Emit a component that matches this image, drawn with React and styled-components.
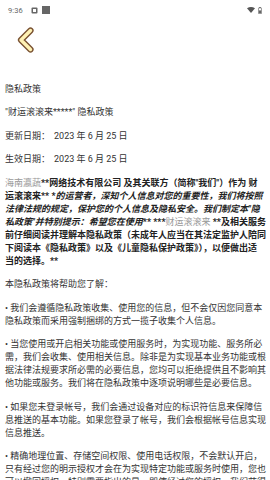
import React from "react";
import styled, { createGlobalStyle } from "styled-components";

const GlobalStyle = createGlobalStyle`
  html, body { margin: 0; padding: 0; background: #ffffff; }
  body { font-family: Roboto, "Noto Sans CJK SC", sans-serif; }
`;

const Page = styled.div`
  width: 270px;
  height: 480px;
  overflow: hidden;
  background: #fff;
`;

const StatusBar = styled.div`
  height: 20px;
  display: flex;
  align-items: center;
  justify-content: space-between;
  padding: 0 8px 0 8px;
  box-sizing: border-box;
  color: #666;
  font-size: 7.5px;
`;

const StatusGroup = styled.div`
  display: flex;
  align-items: center;
  gap: ${(p) => p.$gap || 4}px;
`;

const Time = styled.span`
  margin-right: 4px;
  letter-spacing: 0.1px;
`;

const NavBar = styled.div`
  height: 62.5px;
  box-sizing: border-box;
  padding: 7px 0 0 16px;
`;

const BackButton = styled.button`
  border: 0;
  background: none;
  padding: 0;
  width: 20px;
  height: 26px;
  display: block;
  cursor: pointer;
`;

const Content = styled.div`
  padding: 0 3px 0 5px;
  font-family: Roboto, "Noto Sans CJK SC", sans-serif;
  font-size: 9px;
  line-height: 13px;
  color: #333;
`;

const P = styled.p`
  margin: 0 0 10.5px;
  font-weight: ${(p) => (p.$bold ? 700 : 400)};
  color: ${(p) => (p.$bold ? "#222" : "#333")};
  white-space: ${(p) => (p.$bold ? "nowrap" : "normal")};
`;

const Muted = styled.span`
  color: #999;
  font-weight: 400;
`;

const Em = styled.em`
  font-style: italic;
`;

const Spaced = styled.span`
  margin-left: 4px;
`;

function Chevron() {
  return (
    <svg width="20" height="26" viewBox="0 0 20 26">
      <path
        d="M14.5 3.5 L5 13 L14.5 22.5"
        fill="none"
        stroke="#7a5232"
        strokeWidth="6.2"
        strokeLinecap="round"
        strokeLinejoin="round"
      />
      <path
        d="M14.5 3.5 L5 13 L14.5 22.5"
        fill="none"
        stroke="#fff2b4"
        strokeWidth="3.4"
        strokeLinecap="round"
        strokeLinejoin="round"
      />
    </svg>
  );
}

function NotifIcon() {
  return (
    <svg width="7" height="7" viewBox="0 0 7 7">
      <rect x="0.5" y="0.5" width="6" height="6" rx="1" fill="#666" />
      <rect x="2" y="2" width="3" height="3" fill="#fff" />
    </svg>
  );
}

function SquareIcon() {
  return (
    <svg width="8" height="8" viewBox="0 0 8 8">
      <rect x="0" y="0" width="8" height="8" fill="#666" />
    </svg>
  );
}

function WifiIcon() {
  return (
    <svg width="8" height="6" viewBox="0 0 8 6">
      <path d="M0 1.2 Q4 -1 8 1.2 L4 6 Z" fill="#555" />
    </svg>
  );
}

function BatteryIcon() {
  return (
    <svg width="4" height="7" viewBox="0 0 4 7">
      <rect x="1.2" y="0" width="1.6" height="1" fill="#666" />
      <rect x="0.4" y="0.9" width="3.2" height="5.8" rx="0.4" fill="none" stroke="#666" strokeWidth="0.7" />
      <rect x="0.9" y="3.4" width="2.2" height="2.8" fill="#666" />
    </svg>
  );
}

const bullets = [
  "• 我们会遵循隐私政策收集、使用您的信息，但不会仅因您同意本隐私政策而采用强制捆绑的方式一揽子收集个人信息。",
  "• 当您使用或开启相关功能或使用服务时，为实现功能、服务所必需，我们会收集、使用相关信息。除非是为实现基本业务功能或根据法律法规要求所必需的必要信息，您均可以拒绝提供且不影响其他功能或服务。我们将在隐私政策中逐项说明哪些是必要信息。",
  "• 如果您未登录帐号，我们会通过设备对应的标识符信息来保障信息推送的基本功能。如果您登录了帐号，我们会根据帐号信息实现信息推送。",
  "• 精确地理位置、存储空间权限、使用电话权限，不会默认开启，只有经过您的明示授权才会在为实现特定功能或服务时使用，您也可以撤回授权。特别需要指出的是，即使经过您的授权，我们获得了这些敏感权限，也不会在相关功能或服务不需要时而收集您的信息。",
];

export default function App() {
  return (
    <Page>
      <GlobalStyle />
      <StatusBar>
        <StatusGroup $gap={4}>
          <Time>9:36</Time>
          <NotifIcon />
          <SquareIcon />
        </StatusGroup>
        <StatusGroup $gap={3}>
          <WifiIcon />
          <BatteryIcon />
        </StatusGroup>
      </StatusBar>
      <NavBar>
        <BackButton aria-label="返回">
          <Chevron />
        </BackButton>
      </NavBar>
      <Content>
        <P>隐私政策</P>
        <P>"财运滚滚来*****" 隐私政策</P>
        <P>更新日期：<Spaced>2023 年 6 月 25 日</Spaced></P>
        <P>生效日期：<Spaced>2023 年 6 月 25 日</Spaced></P>
        <P $bold>
          <Muted>海南瀛蔬</Muted>**网络技术有限公司 及其关联方（简称"我们"）作为 财
          <br />
          运滚滚来** *
          <Em>
            的运营者，深知个人信息对您的重要性，我们将按照
            <br />
            法律法规的规定，保护您的个人信息及隐私安全。我们制定本"隐
            <br />
            私政策"并特别提示：希望您在使用
          </Em>
          ** ***<Muted>财运滚滚来</Muted> **及相关服务
          <br />
          前仔细阅读并理解本隐私政策（未成年人应当在其法定监护人陪同
          <br />
          下阅读本《隐私政策》以及《儿童隐私保护政策》），以便做出适
          <br />
          当的选择。**
        </P>
        <P>本隐私政策将帮助您了解：</P>
        {bullets.map((b, i) => (
          <P key={i}>{b}</P>
        ))}
      </Content>
    </Page>
  );
}
